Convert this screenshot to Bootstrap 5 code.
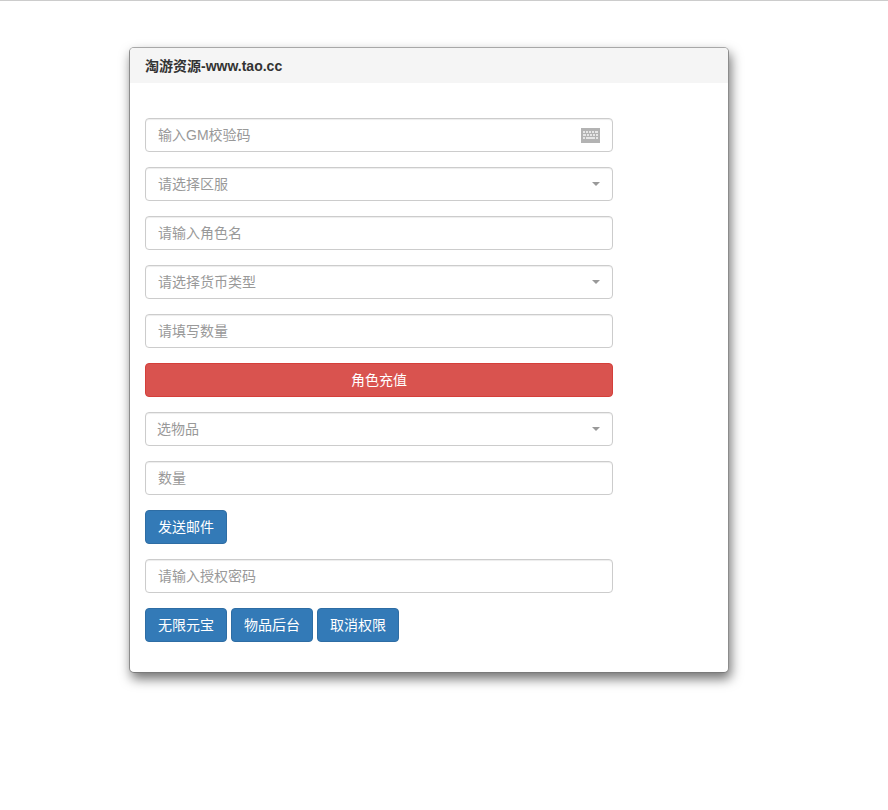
<!DOCTYPE html>
<html lang="zh">
<head>
  <meta charset="utf-8">
  <title>淘游资源</title>
  <link href="https://cdn.jsdelivr.net/npm/bootstrap@5.3.3/dist/css/bootstrap.min.css" rel="stylesheet">
  <style>
    body {
      font-family: "Liberation Sans", "Noto Sans CJK SC", sans-serif;
      font-size: 14px;
      color: #333;
      background: #fff;
      min-height: 100vh;
    }
    .top-line { height: 1px; background: #ccc; }
    .gm-panel {
      width: 600px;
      margin: 46px 0 0 129px;
      border: 1px solid #8c8c8c;
      border-color: #a8a8a8 #8c8c8c #7a7a7a;
      border-radius: 5px;
      box-shadow: 2px 6px 12px rgba(0, 0, 0, .55);
      background: #fff;
    }
    .gm-head {
      height: 35px;
      padding: 0 15px;
      line-height: 36px;
      font-size: 14px;
      font-weight: 700;
      color: #333;
      background: #f5f5f5;
      border-radius: 4px 4px 0 0;
    }
    .gm-body { padding: 35px 15px 30px; }
    .gm-form { width: 468px; gap: 15px; }
    .gm-form .form-control,
    .gm-form .form-select {
      height: 34px;
      padding: 6px 12px;
      font-size: 14px;
      line-height: 20px;
      color: #555;
      border: 1px solid #ccc;
      border-radius: 4px;
      box-shadow: inset 0 1px 1px rgba(0, 0, 0, .075);
    }
    .gm-form .form-control::placeholder { color: #999; opacity: 1; }
    .gm-form .form-select {
      color: #999;
      background-image: none;
    }
    .gm-form .form-select.item-select { padding-left: 11px; }
    .gm-form .btn {
      height: 34px;
      padding: 6px 12px;
      font-size: 14px;
      line-height: 20px;
      border-radius: 4px;
      color: #fff;
    }
    .btn-gm { background: #337ab7; border: 1px solid #2e6da4; }
    .btn-gm-red { background: #d9534f; border: 1px solid #d43f3a; }
    .btn-row { gap: 4px; }
    .caret-mark {
      position: absolute;
      right: 13px;
      top: 15px;
      width: 0;
      height: 0;
      border-top: 4px solid #999;
      border-left: 4px solid transparent;
      border-right: 4px solid transparent;
      pointer-events: none;
    }
    .key-icon { position: absolute; right: 13px; top: 10px; }
  </style>
</head>
<body>
  <div class="top-line"></div>

  <div class="gm-panel">
    <div class="gm-head">淘游资源-www.tao.cc</div>
    <div class="gm-body">
      <form class="gm-form d-flex flex-column">
        <div class="position-relative">
          <input type="text" class="form-control" placeholder="输入GM校验码">
          <svg class="key-icon" width="19" height="15" viewBox="0 0 19 15">
            <rect width="19" height="15" fill="#b3b3b3"/>
            <path d="M2 3h2v2H2zM5 3h2v2H5zM8 3h2v2H8zM11 3h2v2h-2zM14 3h3v2h-3zM2 6h3v2H2zM6 6h2v2H6zM9 6h2v2H9zM12 6h2v2h-2zM15 6h2v2h-2zM2 9h2v2H2zM5 9h9v2H5zM15 9h2v2h-2z" fill="#e6e6e6"/>
          </svg>
        </div>
        <div class="position-relative">
          <select class="form-select"><option>请选择区服</option></select>
          <span class="caret-mark"></span>
        </div>
        <input type="text" class="form-control" placeholder="请输入角色名">
        <div class="position-relative">
          <select class="form-select"><option>请选择货币类型</option></select>
          <span class="caret-mark"></span>
        </div>
        <input type="text" class="form-control" placeholder="请填写数量">
        <button type="button" class="btn btn-gm-red w-100">角色充值</button>
        <div class="position-relative">
          <select class="form-select item-select"><option>选物品</option></select>
          <span class="caret-mark"></span>
        </div>
        <input type="text" class="form-control" placeholder="数量">
        <div><button type="button" class="btn btn-gm">发送邮件</button></div>
        <input type="text" class="form-control" placeholder="请输入授权密码">
        <div class="d-flex btn-row">
          <button type="button" class="btn btn-gm">无限元宝</button>
          <button type="button" class="btn btn-gm">物品后台</button>
          <button type="button" class="btn btn-gm">取消权限</button>
        </div>
      </form>
    </div>
  </div>

  <script src="https://cdn.jsdelivr.net/npm/bootstrap@5.3.3/dist/js/bootstrap.bundle.min.js"></script>
</body>
</html>
